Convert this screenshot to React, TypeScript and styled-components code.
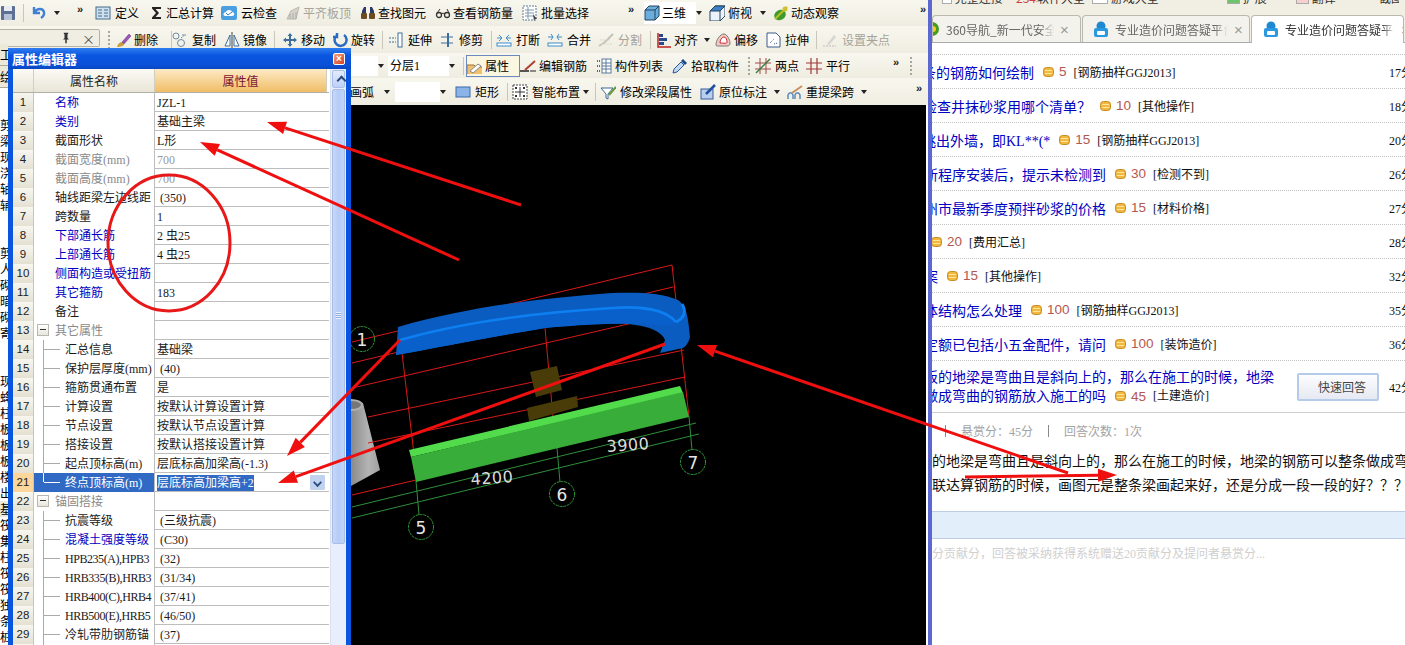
import React from "react";
import styled, { createGlobalStyle } from "styled-components";

const Global = createGlobalStyle`
  html, body { margin: 0; padding: 0; background: #fff; overflow: hidden; }
  * { box-sizing: border-box; }
  body { font-family: "Noto Sans CJK SC", "Liberation Sans", sans-serif; font-size: 12px; color: #000; }
`;

const CJK = `"Liberation Serif", "Noto Sans CJK SC", serif`;

/* ---------- page frame ---------- */
const Page = styled.div`
  position: relative; width: 1405px; height: 645px; display: flex; overflow: hidden;
`;
const Software = styled.div`
  width: 928px; height: 645px; flex: none; display: flex; flex-direction: column; background: #f4f2e8;
`;
const Divider = styled.div`
  width: 4px; flex: none; background: #5b68d2;
`;
const Browser = styled.div`
  flex: 1; min-width: 0; display: flex; flex-direction: column; background: #fff; overflow: hidden;
`;
const Workspace = styled.div`
  flex: 1; min-height: 0; display: flex;
`;
const Sidebar = styled.div`
  width: 350px; flex: none; background: #fff; display: flex; flex-direction: column;
`;
const SideTab = styled.div`
  height: 22px; width: 8px; flex: none; line-height: 22px; background: #ece9d8; border-bottom: 1px solid #aca899; white-space: nowrap; overflow: hidden;
  &:first-child { margin-top: -9px; }
`;
const SideList = styled.div`
  margin-top: 29px; display: flex; flex-direction: column;
`;
const SideItem = styled.div<{ $on?: boolean }>`
  height: 16px; width: 8px; overflow: hidden; line-height: 16px; font-size: 12px; background: ${(p) => (p.$on ? "#ece9d8" : "transparent")};
`;
const RightColumn = styled.div`
  flex: 1; min-width: 0; display: flex; flex-direction: column;
`;
const Canvas = styled.div`
  flex: 1; min-height: 0; background: #000; border-right: 2px solid #fff;
`;
const CanvasSvg = styled.svg`
  display: block;
`;

/* ---------- toolbars ---------- */
const Bar = styled.div<{ $h: number }>`
  height: ${(p) => p.$h}px; flex: none; display: flex; align-items: center; overflow: hidden;
  background: linear-gradient(#f8f7ef, #efede1);
`;
const Tool = styled.div<{ $w: number; $off?: boolean; $active?: boolean; $white?: boolean; $gap?: number }>`
  width: ${(p) => p.$w}px; flex: none; display: flex; align-items: center; gap: ${(p) => p.$gap ?? 3}px;
  height: 22px; white-space: nowrap; line-height: 22px; font-size: 12px; overflow: hidden;
  color: ${(p) => (p.$off ? "#a5a39a" : "#000")};
  background: ${(p) => (p.$white ? "#fff" : p.$active ? "#fbf6df" : "transparent")};
  outline: ${(p) => (p.$active ? "1px solid #6d8ac0" : "none")};
  outline-offset: -1px;
  svg { flex: none; }
`;
const Sep = styled.div<{ $w: number }>`
  width: ${(p) => p.$w}px; flex: none; height: 18px; position: relative;
  &::before { content: ""; position: absolute; left: 0; top: 0; bottom: 0; width: 1px; background: #c9c7ba; }
`;
const Dots = styled.div<{ $w: number }>`
  width: ${(p) => p.$w}px; flex: none; height: 18px; background: radial-gradient(circle at 1px 1px, #a9a79c 1px, transparent 1.2px) 0 0 / 3px 4px repeat-y;
`;
const More = styled.div<{ $w: number }>`
  width: ${(p) => p.$w}px; flex: none; height: 22px; font: bold 11px/14px "Liberation Sans", sans-serif; color: #222;
`;
const Caret = styled.div<{ $w: number }>`
  width: ${(p) => p.$w}px; flex: none; height: 20px; position: relative;
  &::before { content: ""; position: absolute; left: 0; top: 8px; border: 3px solid transparent; border-top: 4px solid #222; border-bottom: 0; }
`;
const Combo = styled.div<{ $w: number }>`
  width: ${(p) => p.$w}px; flex: none; height: 20px; background: #fff; line-height: 20px; padding-left: 2px; font-family: ${CJK};
`;
const DockHeader = styled.div<{ $w: number }>`
  width: ${(p) => p.$w}px; flex: none; height: 18px; border: 1px solid #b4b2a5; border-left: 0; border-radius: 0 2px 2px 0;
  background: #f0eee2; display: flex; align-items: center; justify-content: flex-end; gap: 10px; padding-right: 4px; font-size: 13px; color: #555;
  margin-right: 8px; margin-top: -3px;
`;

/* ---------- property dialog ---------- */
const Dialog = styled.div`
  position: absolute; left: 8px; top: 48px; width: 343px; height: 597px; z-index: 3; display: flex; flex-direction: column;
  background: #0a55e0; border-radius: 3px 3px 0 0; padding: 0 5px 0 5px;
`;
const TitleBar = styled.div`
  height: 21px; flex: none; margin: 0 -5px; padding: 0 6px 0 4px; display: flex; align-items: center; justify-content: space-between;
  background: linear-gradient(#2f7df0, #0a56e0 35%, #0a50d8 80%, #0a48c0);
  color: #fff; font-weight: 700; font-size: 13px; letter-spacing: 0;
`;
const CloseBtn = styled.div`
  width: 12px; height: 12px; background: linear-gradient(135deg, #f0a080, #d8401c); border: 1px solid #fff; border-radius: 2px;
  color: #fff; font: bold 10px/10px "Liberation Sans", sans-serif; text-align: center;
`;
const DialogBody = styled.div`
  flex: 1; min-height: 0; display: flex; background: #fff; overflow: hidden;
`;
const Sheet = styled.div`
  width: 316px; flex: none; display: flex; flex-direction: column;
`;
const Row = styled.div`
  display: grid; grid-template-columns: 21px 121px 172px; height: 19px; flex: none; border-bottom: 1px solid #bdbdbd; position: relative;
`;
const HeadRow = styled(Row)`
  height: 24px; border-bottom: 1px solid #b0b0a8;
`;
const HeadCell = styled.div<{ $value?: boolean }>`
  line-height: 23px; text-align: center; font-size: 12px;
  color: ${(p) => (p.$value ? "#7b1230" : "#222")};
  background: ${(p) => (p.$value ? "linear-gradient(#fdeac6, #f0bd66)" : "linear-gradient(#fbfaf4, #e9e6d8)")};
  border-right: 1px solid #d0cebf;
`;
const NumCell = styled.div<{ $on?: boolean }>`
  line-height: 19px; text-align: center; font-size: 11.5px; font-family: "Liberation Sans", sans-serif; color: #222;
  background: ${(p) => (p.$on ? "#fcd69a" : "linear-gradient(#f7f6ef, #e4e1d3)")};
  border-right: 1px solid #c8c6b8;
`;
const NameCell = styled.div<{ $indent?: boolean; $tone: string; $on?: boolean; $last?: boolean; $narrow?: boolean }>`
  position: relative; line-height: 20px; white-space: nowrap; overflow: hidden; font-family: ${CJK}; font-size: 12px;
  letter-spacing: ${(p) => (p.$narrow ? "-0.45px" : "0")};
  padding-left: ${(p) => (p.$indent ? "31px" : "21px")};
  color: ${(p) => (p.$on ? "#fff" : p.$tone === "blue" ? "#0000c0" : p.$tone === "gray" ? "#8a8a8a" : "#1a1a1a")};
  background: ${(p) => (p.$on ? "#316ac5" : "#fff")};
  border-right: 1px solid #bdbdbd;
  ${(p) => p.$indent && `
    &::before { content: ""; position: absolute; left: 9px; top: 0; height: ${p.$last ? "9px" : "19px"}; width: 1px; background: ${p.$on ? "#fff" : "#aaa"}; }
    &::after { content: ""; position: absolute; left: 10px; top: 9px; width: 16px; height: 1px; background: ${p.$on ? "#fff" : "#aaa"}; }
  `}
`;
const GroupBox = styled.span`
  position: absolute; left: 3px; top: 3px; width: 12px; height: 12px; border: 1px solid #b8b8b0; background: linear-gradient(#fff, #e8e6da);
  &::before { content: ""; position: absolute; left: 2px; right: 2px; top: 4px; height: 1px; background: #333; }
`;
const ValueCell = styled.div<{ $gray?: boolean }>`
  position: relative; line-height: 20px; white-space: pre; overflow: hidden; padding-left: 2px; font-family: ${CJK}; font-size: 12px;
  color: ${(p) => (p.$gray ? "#999" : "#1a1a1a")};
`;
const Selected = styled.span`
  background: #316ac5; color: #fff; display: inline-block; line-height: 16px; height: 16px; margin-top: 0;
`;
const DropBtn = styled.span`
  position: absolute; right: 2px; top: 2px; width: 15px; height: 15px; background: #c1d2ee; border-radius: 1px;
  &::before { content: ""; position: absolute; left: 4px; top: 4px; width: 5px; height: 5px; border-right: 2px solid #2a4a80; border-bottom: 2px solid #2a4a80; transform: rotate(45deg) scale(.9); }
`;
const Scroll = styled.div`
  flex: 1; margin-left: 1px; padding: 1px 1px 0; background: #e8eefb; display: flex; flex-direction: column; gap: 1px; border-left: 1px solid #d8e0f0;
`;
const ScrollBtn = styled.div`
  height: 18px; flex: none; background: linear-gradient(#e4ecfc, #bcd0f6); border: 1px solid #a8bde8; border-radius: 2px; position: relative;
  &::before { content: ""; position: absolute; left: 5px; top: 6px; width: 5px; height: 5px; border-left: 2px solid #2a4a80; border-top: 2px solid #2a4a80; transform: rotate(45deg); }
`;
const ScrollThumb = styled.div`
  height: 455px; flex: none; background: linear-gradient(90deg, #c6d7f8, #b6ccf6 50%, #c2d4f8); border: 1px solid #a8bde8; border-radius: 2px; position: relative;
  &::before { content: ""; position: absolute; left: 3px; right: 3px; top: 222px; height: 7px;
    background: repeating-linear-gradient(#eef3fd 0 1px, #8da8dc 1px 2px); }
`;

/* ---------- browser ---------- */
const Strip = styled.div`
  height: 15px; flex: none; overflow: hidden; background: #f1efe3; position: relative;
`;
const StripInner = styled.div`
  margin-top: -10px; display: flex; align-items: center; height: 14px; color: #333; font-size: 12px; white-space: nowrap;
`;
const StripItem = styled.span<{ $w: number; $c?: string; $box?: string }>`
  width: ${(p) => p.$w}px; flex: none; overflow: hidden; color: ${(p) => p.$c ?? "#333"};
  ${(p) => p.$box && `height: 14px; border: 1px solid #aaa; background: ${p.$box};`}
`;
const Tabs = styled.div`
  height: 28px; flex: none; display: flex; align-items: flex-end; gap: 1px; background: #f1efe3; border-bottom: 1px solid #aaa;
`;
const Tab = styled.div<{ $w: number; $on?: boolean; $pad: number }>`
  width: ${(p) => p.$w}px; flex: none; height: ${(p) => (p.$on ? "28px" : "27px")}; display: flex; align-items: center; gap: 6px; padding-left: ${(p) => p.$pad}px; overflow: hidden;
  border: 1px solid #b9b9b0; border-bottom: 0; border-radius: 4px 4px 0 0;
  background: ${(p) => (p.$on ? "#fff" : "#f3f2ec")}; color: ${(p) => (p.$on ? "#333" : "#666")};
  margin-bottom: ${(p) => (p.$on ? "-1px" : "0")};
  font-size: 12px; white-space: nowrap;
`;
const TabText = styled.span<{ $w: number }>`
  width: ${(p) => p.$w}px; flex: none; overflow: hidden;
  -webkit-mask-image: linear-gradient(90deg, #000 88%, transparent);
  mask-image: linear-gradient(90deg, #000 88%, transparent);
`;
const TabClose = styled.span`
  color: #999; font: 15px/15px "Liberation Sans", sans-serif; flex: none;
`;
const List = styled.div`
  margin-top: 11px; display: flex; flex-direction: column; border-top: 1px dotted #c4c4c4;
`;
const Item = styled.div<{ $tall?: boolean }>`
  height: ${(p) => (p.$tall ? "52px" : "34px")}; flex: none; display: flex; align-items: center; overflow: hidden; white-space: nowrap;
  border-bottom: ${(p) => (p.$tall ? "1px solid #cfcfcf" : "1px dotted #c4c4c4")};
`;
const ItemMain = styled.div<{ $lead: number }>`
  display: flex; align-items: center; margin-left: ${(p) => p.$lead}px;
`;
const ItemStack = styled.div<{ $lead: number }>`
  display: flex; flex-direction: column; margin-left: ${(p) => p.$lead}px; line-height: 19px;
`;
const Title = styled.span`
  color: #0000c0; font-size: 14px; font-family: ${CJK}; margin-right: 9px;
`;
const Score = styled.span`
  color: #b4574e; font: 13.5px "Liberation Sans", sans-serif; margin: 0 7px 0 5px;
`;
const Tag = styled.span`
  font-family: ${CJK}; font-size: 12px; color: #111;
`;
const Spacer = styled.div`
  flex: 1;
`;
const Time = styled.span`
  width: 16px; flex: none; overflow: hidden; font-family: ${CJK}; font-size: 12px; color: #111; white-space: nowrap;
`;
const QuickBtn = styled.div`
  width: 82px; height: 28px; flex: none; margin-right: 10px; border: 2px solid #b5cbea; border-radius: 2px; text-align: right; padding-right: 11px; line-height: 23px;
  background: linear-gradient(#fdfdff, #e6e9f2); color: #444; font-size: 12px;
`;
const Meta = styled.div`
  height: 35px; flex: none; display: flex; align-items: center; color: #a3a3a3; font-size: 12px; padding-left: 13px;
`;
const MetaSep = styled.span`
  width: 1px; height: 12px; background: #888; flex: none;
`;
const MetaText = styled.span`
  margin: 0 15px; font-family: ${CJK};
`;
const Para = styled.div`
  font-size: 14px; line-height: 24px; white-space: nowrap; color: #111;
`;
const Band = styled.div`
  height: 28px; flex: none; margin-top: 15px; background: #e3eefb; border-top: 1px solid #bccde4; border-bottom: 1px solid #bccde4;
`;
const Placeholder = styled.div`
  margin-top: 5px; line-height: 20px; color: #cfcfcf; font-size: 12px; white-space: nowrap; font-family: ${CJK};
`;

const Overlay = styled.svg`
  position: absolute; left: 0; top: 0; z-index: 5; pointer-events: none;
`;

/* ---------- icons ---------- */
const shapes: Record<string, React.ReactNode> = {
  save: <><rect x="1" y="1" width="14" height="14" rx="1" fill="#5c6f94" /><rect x="4" y="1" width="8" height="5" fill="#e8ecf4" /><rect x="4" y="9" width="8" height="6" fill="#b7c2d8" /></>,
  undo: <path d="M3 2v6h6M4 7c2-4 8-4 9 0 .6 3-1.500 5-3 6" fill="none" stroke="#3f7fd4" strokeWidth="2.400" />,
  define: <><rect x="1" y="2" width="14" height="12" fill="#cfe0ef" stroke="#456a8c" /><path d="M3 5h4M3 8h4M3 11h4M9 5h4M9 8h4M9 11h4" stroke="#456a8c" /></>,
  sigma: <path d="M3 2h9v2H6.500l3.500 4-3.500 4H12v2H3v-1.500L7 8 3 3.500z" fill="#222" />,
  cloud: <><rect x="0" y="1" width="16" height="14" rx="2" fill="#4a9fe0" /><path d="M4 11c-3-1-1-4 1-4 1-3 6-2 6 0 3 0 3 4 0 4z" fill="#fff" /><path d="M5 8l2 2 4-3" stroke="#3a86cc" fill="none" /></>,
  flat: <><path d="M2 14l4-8 8-4-3 12z" fill="#d5d4cc" stroke="#b9b8ae" /><path d="M5 14V9M8 14V8M11 14V7" stroke="#aaa" /></>,
  binoc: <><path d="M2 13V6l2-4h2v11zM14 13V6l-2-4h-2v11z" fill="#2b3a66" /><rect x="1" y="8" width="6" height="6" rx="1" fill="#6d4a22" /><rect x="9" y="8" width="6" height="6" rx="1" fill="#6d4a22" /></>,
  glasses: <><circle cx="4" cy="10" r="2.500" fill="none" stroke="#333" strokeWidth="1.300" /><circle cx="12" cy="10" r="2.500" fill="none" stroke="#333" strokeWidth="1.300" /><path d="M6 9c1-1 3-1 4 0M2 8l3-4M14 8l-2-4" stroke="#333" fill="none" /></>,
  batch: <><rect x="1" y="1" width="13" height="14" fill="#fff" stroke="#5a7a9a" strokeDasharray="2 1" /><path d="M3 5h9M3 8h9M3 11h9M6 2v12" stroke="#7e95ae" /><path d="M11 9l4 5-2 0 -1 2z" fill="#444" /></>,
  cube: <><path d="M1 5l4-4h10v10l-4 4H1z" fill="#6aaede" stroke="#27435f" /><path d="M1 5h10v10M11 5l4-4" fill="none" stroke="#27435f" /></>,
  cubeTop: <><path d="M1 6l5-5h10v10l-5 5H1z" fill="#eaf3fa" stroke="#27435f" /><path d="M1 6l5-5h10l-5 5z" fill="#3f7fc4" stroke="#27435f" /><path d="M11 6v10" stroke="#27435f" /></>,
  orbit: <><ellipse cx="7" cy="10" rx="6" ry="5" fill="#3f9a2e" transform="rotate(-30 7 10)" /><path d="M2 14L14 2" stroke="#b8c020" strokeWidth="2" /><circle cx="12" cy="4" r="2.500" fill="#d0c030" /></>,
  brush: <><path d="M1 15c1-4 3-5 6-5l1 2c0 2-3 3-7 3z" fill="#c8a040" /><path d="M6 10l7-8 2 2-7 8z" fill="#9a58b4" stroke="#6a3a84" strokeWidth=".5" /></>,
  copy: <><circle cx="4" cy="4" r="3" fill="none" stroke="#6f8aa8" /><circle cx="9" cy="11" r="3.500" fill="none" stroke="#6f8aa8" /><path d="M9 6l5-4M10 3h4" stroke="#6f8aa8" strokeDasharray="2 1" /></>,
  mirror: <><path d="M8 0v16" stroke="#444" /><path d="M6 3v11H1zM10 3v11h5z" fill="#fff" stroke="#3c6c9a" /></>,
  move: <path d="M8 1l2.500 3H9v3h3V5.500L15 8l-3 2.500V9H9v3h1.500L8 15l-2.500-3H7V9H4v1.500L1 8l3-2.500V7h3V4H5.500z" fill="#3d6e9c" />,
  rotate: <path d="M12 3a6 6 0 1 1-8 1M5 1v4H1" fill="none" stroke="#2a6cc4" strokeWidth="2.500" />,
  extend: <><path d="M1 6h7M1 10h7" stroke="#3d6e9c" strokeDasharray="2 1" /><rect x="10" y="1" width="4" height="14" fill="#fff" stroke="#3d6e9c" /></>,
  trim: <><path d="M1 5h12M1 11h12" stroke="#3d6e9c" /><rect x="7" y="1" width="2" height="14" fill="#3d6e9c" /></>,
  cut: <><path d="M1 6h5M10 6h5M3 3l3 3-3 3M13 3l-3 3 3 3" fill="none" stroke="#3d8cc8" /><rect x="1" y="11" width="14" height="3" fill="#fff" stroke="#3d8cc8" /></>,
  merge: <><path d="M1 5h5M10 5h5M4 2l2 3-2 3M12 2l-2 3 2 3" fill="none" stroke="#3d8cc8" /><rect x="1" y="11" width="14" height="3" fill="#fff" stroke="#3d8cc8" /></>,
  split: <><path d="M1 14l6-4 8-8" stroke="#c4c2b8" strokeWidth="2" fill="none" /><path d="M2 8h10M3 12h11" stroke="#d8d6cc" strokeDasharray="2 1" /></>,
  align: <><path d="M2 1v14h13" stroke="#c02020" strokeWidth="1.500" fill="none" /><rect x="3" y="2" width="4" height="3" fill="#2a4a90" /><rect x="3" y="6" width="8" height="3" fill="#2a4a90" /><rect x="3" y="10" width="5" height="3" fill="#2a4a90" /></>,
  offset: <><path d="M1 13c0-5 4-11 8-11 3 0 6 6 6 9 0 2-1 3-3 3H3c-1 0-2 0-2-1z" fill="#f2c8c0" stroke="#7a7a7a" /><path d="M5 11c0-3 2-6 4-6s3 3 3 5-3 1-7 1z" fill="#fff" stroke="#c23" /></>,
  stretch: <><path d="M1 1h9l4 4v10H1z" fill="#fff" stroke="#3a5a8a" /><path d="M4 11l4-4M8 12l4-1" stroke="#3a5a8a" strokeDasharray="1 1" /></>,
  grip: <><path d="M1 14h13" stroke="#bbb" strokeDasharray="2 1" /><path d="M5 12l7-9 2 2-7 8z" fill="#d8d6cc" /></>,
  prop: <><path d="M1 7h7l2 2h9v8H1z" fill="#f0c070" stroke="#a07030" /><path d="M4 13l8-7 3 2-8 7z" fill="#fff" stroke="#888" /></>,
  edit: <><path d="M0 13h9" stroke="#222" strokeWidth="1.500" /><path d="M5 12L15 3" stroke="#b04030" strokeWidth="2" /><path d="M10 13h7" stroke="#222" /></>,
  list: <><path d="M1 3h3M1 8h3M1 13h3" stroke="#666" strokeDasharray="1 1" strokeWidth="2" /><rect x="6" y="1" width="9" height="14" fill="#fff" stroke="#5a7a9a" /><path d="M6 5h9M6 8h9M6 11h9M10 1v14" stroke="#5a7a9a" /></>,
  pick: <><path d="M1 15l1-4 7-7 3 3-7 7z" fill="#bcd8f4" stroke="#2a5a9a" /><path d="M9 3l2-2 4 4-2 2z" fill="#1a4a8a" /></>,
  twoPt: <><path d="M0 5h16M0 11h16M5 0v16M11 0v16" stroke="#a04848" /><path d="M1 15L15 1" stroke="#3a7a3a" strokeWidth="1.500" /></>,
  parallel: <path d="M0 5h16M0 11h16M5 0v16M11 0v16" stroke="#a03838" strokeWidth="1.200" />,
  rect: <rect x="1" y="3" width="14" height="10" fill="#8ab4e8" stroke="#3a6aa8" />,
  smart: <><rect x="1" y="1" width="14" height="14" fill="#fff" stroke="#444" strokeDasharray="2 1" /><path d="M8 3v10M3 8h10" stroke="#333" /><rect x="3" y="3" width="2" height="2" fill="#333" /><rect x="11" y="11" width="2" height="2" fill="#333" /><rect x="11" y="3" width="2" height="2" fill="#333" /><rect x="3" y="11" width="2" height="2" fill="#333" /></>,
  modify: <><path d="M1 4h12l-5 6v5l-2-1v-4z" fill="#fff" stroke="#3a6a9a" /><path d="M9 11l7-8" stroke="#6a9a30" strokeWidth="2" /></>,
  inplace: <><rect x="1" y="5" width="12" height="10" fill="#b8cff0" stroke="#3a5a9a" /><path d="M6 10L15 1" stroke="#2050a0" strokeWidth="2.500" /></>,
  respan: <><path d="M1 15v-4c1-3 4-3 5 0v4M8 15v-4c1-3 4-3 5 0v4" fill="none" stroke="#5a8ac0" strokeWidth="1.500" /><path d="M5 9L15 2" stroke="#c89060" strokeWidth="2" /></>,
  pin: <path d="M5 1h6v1l-1 1v5l2 2H9v5H7v-5H4l2-2V3L5 2z" fill="#333" />,
};

function Icon({ name, size = 16 }: { name: string; size?: number }) {
  return <svg width={size} height={size} viewBox="0 0 16 16">{shapes[name]}</svg>;
}

type Entry = { x: number; k?: "sep" | "dots" | "more" | "caret" | "combo"; i?: string; t?: string; off?: boolean; active?: boolean; white?: boolean; gap?: number };

function Entries({ end, entries }: { end: number; entries: Entry[] }) {
  return (
    <>
      {entries.map((e, n) => {
        const next = n + 1 < entries.length ? entries[n + 1].x : end;
        const w = next - e.x;
        if (e.k === "sep") return <Sep key={n} $w={w} />;
        if (e.k === "dots") return <Dots key={n} $w={w} />;
        if (e.k === "more") return <More key={n} $w={w}>»</More>;
        if (e.k === "caret") return <Caret key={n} $w={w} />;
        if (e.k === "combo") return <Combo key={n} $w={w}>{e.t}</Combo>;
        return (
          <Tool key={n} $w={w} $off={e.off} $active={e.active} $white={e.white} $gap={e.gap}>
            {e.i && <Icon name={e.i} />}
            {e.t && <span>{e.t}</span>}
          </Tool>
        );
      })}
    </>
  );
}

const row1: Entry[] = [
  { x: -4, i: "save" }, { x: 19, k: "sep" }, { x: 27, i: "undo" }, { x: 50, k: "caret" }, { x: 73, k: "more" },
  { x: 91, i: "define", t: "定义", gap: 4 }, { x: 145, i: "sigma", t: "汇总计算", gap: 1 }, { x: 217, i: "cloud", t: "云检查", gap: 4 },
  { x: 281, i: "flat", t: "平齐板顶", off: true, gap: 2 }, { x: 356, i: "binoc", t: "查找图元", gap: 2 }, { x: 431, i: "glasses", t: "查看钢筋量", gap: 2 },
  { x: 518, i: "batch", t: "批量选择", gap: 3 }, { x: 624, k: "more" }, { x: 640, i: "cube", t: "三维", white: true, gap: 2 }, { x: 692, k: "caret" },
  { x: 705, i: "cubeTop", t: "俯视", gap: 3 }, { x: 756, k: "caret" }, { x: 769, i: "orbit", t: "动态观察", gap: 2 }, { x: 916, k: "more" },
];
const row2: Entry[] = [
  { x: 108, k: "dots" }, { x: 116, i: "brush", t: "删除", gap: 2 }, { x: 171, k: "sep" }, { x: 172, i: "copy", t: "复制", gap: 4 }, { x: 224, i: "mirror", t: "镜像", gap: 3 },
  { x: 274, k: "sep" }, { x: 282, i: "move", t: "移动", gap: 3 }, { x: 332, i: "rotate", t: "旋转", gap: 3 }, { x: 382, k: "sep" }, { x: 388, i: "extend", t: "延伸", gap: 4 },
  { x: 440, i: "trim", t: "修剪", gap: 3 }, { x: 491, k: "sep" }, { x: 496, i: "cut", t: "打断", gap: 4 }, { x: 547, i: "merge", t: "合并", gap: 4 },
  { x: 598, i: "split", t: "分割", off: true, gap: 4 }, { x: 650, k: "sep" }, { x: 656, i: "align", t: "对齐", gap: 2 }, { x: 704, k: "caret" },
  { x: 715, i: "offset", t: "偏移", gap: 3 }, { x: 766, i: "stretch", t: "拉伸", gap: 3 }, { x: 816, k: "sep" }, { x: 822, i: "grip", t: "设置夹点", off: true, gap: 4 },
];
const row3: Entry[] = [
  { x: 350, k: "combo" }, { x: 378, k: "caret" }, { x: 388, k: "combo", t: "分层1" }, { x: 449, k: "caret" }, { x: 463, k: "sep" },
  { x: 466, i: "prop", t: "属性", active: true, gap: 3 }, { x: 520, i: "edit", t: "编辑钢筋", gap: 3 }, { x: 596, i: "list", t: "构件列表", gap: 3 },
  { x: 672, i: "pick", t: "拾取构件", gap: 3 }, { x: 748, k: "dots" }, { x: 755, i: "twoPt", t: "两点", gap: 4 }, { x: 806, i: "parallel", t: "平行", gap: 4 },
  { x: 893, k: "more" }, { x: 910, k: "dots" },
];
const row4: Entry[] = [
  { x: 350, t: "  画弧", gap: 0 }, { x: 384, k: "caret" }, { x: 395, k: "combo" }, { x: 440, k: "caret" }, { x: 455, i: "rect", t: "矩形", gap: 4 },
  { x: 507, k: "sep" }, { x: 512, i: "smart", t: "智能布置", gap: 4 }, { x: 583, k: "caret" }, { x: 595, k: "sep" }, { x: 600, i: "modify", t: "修改梁段属性", gap: 4 },
  { x: 700, i: "inplace", t: "原位标注", gap: 3 }, { x: 774, k: "caret" }, { x: 787, i: "respan", t: "重提梁跨", gap: 3 }, { x: 861, k: "caret" }, { x: 916, k: "more" },
];

/* ---------- data ---------- */
type P = { name: string; value?: string; tone?: string; indent?: boolean; group?: boolean; grayV?: boolean; on?: boolean; last?: boolean; narrow?: boolean };
const props: P[] = [
  { name: "名称", value: "JZL-1", tone: "blue" },
  { name: "类别", value: "基础主梁", tone: "blue" },
  { name: "截面形状", value: "L形" },
  { name: "截面宽度(mm)", value: "700", tone: "gray", grayV: true },
  { name: "截面高度(mm)", value: "700", tone: "gray", grayV: true },
  { name: "轴线距梁左边线距", value: " (350)" },
  { name: "跨数量", value: "1" },
  { name: "下部通长筋", value: "2 虫25", tone: "blue" },
  { name: "上部通长筋", value: "4 虫25", tone: "blue" },
  { name: "侧面构造或受扭筋", value: "", tone: "blue" },
  { name: "其它箍筋", value: "183", tone: "blue" },
  { name: "备注", value: "" },
  { name: "其它属性", tone: "gray", group: true },
  { name: "汇总信息", value: "基础梁", indent: true },
  { name: "保护层厚度(mm)", value: " (40)", indent: true },
  { name: "箍筋贯通布置", value: "是", indent: true },
  { name: "计算设置", value: "按默认计算设置计算", indent: true },
  { name: "节点设置", value: "按默认节点设置计算", indent: true },
  { name: "搭接设置", value: "按默认搭接设置计算", indent: true },
  { name: "起点顶标高(m)", value: "层底标高加梁高(-1.3)", indent: true },
  { name: "终点顶标高(m)", value: "层底标高加梁高+2", indent: true, on: true, last: true },
  { name: "锚固搭接", tone: "gray", group: true },
  { name: "抗震等级", value: " (三级抗震)", indent: true },
  { name: "混凝土强度等级", value: " (C30)", indent: true, tone: "blue" },
  { name: "HPB235(A),HPB3", value: " (32)", indent: true, narrow: true },
  { name: "HRB335(B),HRB3", value: " (31/34)", indent: true, narrow: true },
  { name: "HRB400(C),HRB4", value: " (37/41)", indent: true, narrow: true },
  { name: "HRB500(E),HRB5", value: " (46/50)", indent: true, narrow: true },
  { name: "冷轧带肋钢筋锚", value: " (37)", indent: true },
  { name: "冷轧扭钢筋锚固", value: " (35)", indent: true },
];

const sideChars = ["剪", "梁", "现", "浇", "轴", "辅", "", "", "剪", "人", "砌", "暗", "砌", "寄", "", "", "现", "蜂", "柱", "板", "板", "板", "楼", "出", "基", "筏", "集", "柱", "筏", "筏", "独", "条", "桩"];

type Q = { lead: number; title?: string; score: string; tag: string; time: string };
const questions: Q[] = [
  { lead: -10, title: "条的钢筋如何绘制", score: "5", tag: "[钢筋抽样GGJ2013]", time: "17分钟" },
  { lead: -9, title: "检查井抹砂浆用哪个清单？", score: "10", tag: "[其他操作]", time: "18分钟" },
  { lead: -10, title: "挑出外墙，即KL**(*", score: "15", tag: "[钢筋抽样GGJ2013]", time: "20分钟" },
  { lead: -8, title: "新程序安装后，提示未检测到", score: "30", tag: "[检测不到]", time: "26分钟" },
  { lead: -8, title: "州市最新季度预拌砂浆的价格", score: "15", tag: "[材料价格]", time: "27分钟" },
  { lead: -1, score: "20", tag: "[费用汇总]", time: "28分钟" },
  { lead: -8, title: "案", score: "15", tag: "[其他操作]", time: "32分钟" },
  { lead: -8, title: "体结构怎么处理", score: "100", tag: "[钢筋抽样GGJ2013]", time: "35分钟" },
  { lead: -8, title: "定额已包括小五金配件，请问", score: "100", tag: "[装饰造价]", time: "36分钟" },
];

function Coin() {
  return (
    <svg width="11" height="10" viewBox="0 0 11 10" style={{ flex: "none" }}>
      <rect x="0.500" y="0.500" width="10" height="9" rx="3" fill="#f0b840" stroke="#c98a20" />
      <path d="M2 3.500h7M2 6.500h7" stroke="#fbe69a" />
    </svg>
  );
}
function Favicon() {
  return (
    <svg width="16" height="17" viewBox="0 0 16 17" style={{ flex: "none" }}>
      <circle cx="8" cy="5" r="4.500" fill="#1e88d0" />
      <rect x="1" y="7" width="14" height="9" rx="2" fill="#2a9ae0" />
      <rect x="4" y="10" width="8" height="4" rx="1" fill="#fff" />
    </svg>
  );
}
function Ball360() {
  return (
    <svg width="12" height="16" viewBox="0 0 12 16" style={{ flex: "none", marginLeft: -5 }}>
      <circle cx="4" cy="8" r="7" fill="#4a9a20" />
      <circle cx="5" cy="8" r="3" fill="#f0d020" />
    </svg>
  );
}

/* ---------- annotation arrows ---------- */
function Arrow({ a, b, c, d }: { a: number; b: number; c: number; d: number }) {
  const len = Math.hypot(c - a, d - b);
  const ux = (c - a) / len, uy = (d - b) / len;
  const L = 19, W = 6.500;
  const bx = c - ux * L, by = d - uy * L;
  const head = `${c},${d} ${bx - uy * W},${by + ux * W} ${bx + uy * W},${by - ux * W}`;
  return (
    <>
      <line x1={a} y1={b} x2={bx} y2={by} stroke="#f00f0f" strokeWidth="3" />
      <polygon points={head} fill="#f00f0f" />
    </>
  );
}

function Axis({ x, y, n }: { x: number; y: number; n: string }) {
  return (
    <>
      <circle cx={x} cy={y} r="12.500" fill="none" stroke="#2f9a3a" strokeDasharray="3 .8" />
      <text x={x} y={y + 6.500} textAnchor="middle" fontSize="17" fontFamily="DejaVu Sans, sans-serif" fill="#e6e6e6">{n}</text>
    </>
  );
}

function Scene() {
  return (
    <CanvasSvg width="576" height="540" viewBox="350 105 576 540">
      <defs>
        <linearGradient id="cone" x1="0" x2="1"><stop offset="0" stopColor="#8a8a8a" /><stop offset=".6" stopColor="#b4b4b4" /><stop offset="1" stopColor="#a0a0a0" /></linearGradient>
      </defs>
      <path d="M351 400l12 3 17 67-29 16z" fill="url(#cone)" />
      <ellipse cx="351" cy="405" rx="11" ry="5" fill="#777" stroke="#b0b0b0" strokeWidth="2" />
      <g stroke="#d81818" strokeWidth="1" fill="none">
        <path d="M352 342L672 265" /><path d="M352 363L673 287" /><path d="M352 388L680 312" />
        <path d="M368 417L684 350" /><path d="M368 443L685 377" /><path d="M352 495L416 480" />
        <path d="M402 353L417 480" /><path d="M545 328L553 417" /><path d="M672 265L689 417" />
      </g>
      <g stroke="#2f8f3a" strokeWidth="1" fill="none">
        <path d="M352 507L696 423" /><path d="M352 518L699 434" />
        <path d="M416 481L419 515" /><path d="M557 448L560 482" /><path d="M689 417L692 450" />
      </g>
      <path d="M530 372L557 366L562 390L536 397zM527 408L577 396L578 407L529 421z" fill="#4a3c08" />
      <path d="M409 450L680 386L683 393L411 457z" fill="#52dc4c" />
      <path d="M411 457L683 392L689 417L416 482z" fill="#38ad3a" />
      <path d="M398 327C470 306 545 298 612 293C640 292 662 293 678 300C685 305 688 312 690 337C689 342 686 346 683 348L660 353L665 340C662 332 650 326 628 324C600 323 570 325 545 328C490 337 440 347 396 355z" fill="#0a5cc0" />
      <path d="M400 340C470 320 545 312 612 308C640 306 664 308 676 322C670 326 662 326 655 325C640 322 590 324 545 328C490 337 440 347 396 355z" fill="#0a60ca" />
      <path d="M400 340C470 320 545 312 612 308C640 306 664 308 676 322" fill="none" stroke="#0d7ff0" strokeWidth="2.500" />
      <path d="M676 322C684 318 687 312 682 304" fill="none" stroke="#0d7ff0" strokeWidth="3" />
      <Axis x={362} y={339} n="1" />
      <Axis x={421} y={527} n="5" />
      <Axis x={562} y={494} n="6" />
      <Axis x={693} y={462} n="7" />
      <text x="0" y="0" fontSize="16" fontFamily="DejaVu Sans, sans-serif" fill="#dcdcdc" transform="translate(471 485) rotate(-4)" letterSpacing=".5">4200</text>
      <text x="0" y="0" fontSize="16" fontFamily="DejaVu Sans, sans-serif" fill="#dcdcdc" transform="translate(607 452) rotate(-4)" letterSpacing=".5">3900</text>
    </CanvasSvg>
  );
}

export default function App() {
  return (
    <Page>
      <Global />
      <Software>
        <Bar $h={26}>
          <Entries end={928} entries={row1} />
        </Bar>
        <Bar $h={27}>
          <DockHeader $w={100}>
            <Icon name="pin" size={12} />
            <span>×</span>
          </DockHeader>
          <Entries end={928} entries={row2} />
        </Bar>
        <Workspace>
          <Sidebar>
            <SideTab>工程</SideTab>
            <SideTab>绘图</SideTab>
            <SideList>
              {sideChars.map((c, i) => (
                <SideItem key={i} $on={c === "基"}>{c}</SideItem>
              ))}
            </SideList>
          </Sidebar>
          <RightColumn>
            <Bar $h={25}>
              <Entries end={928} entries={row3} />
            </Bar>
            <Bar $h={27}>
              <Entries end={928} entries={row4} />
            </Bar>
            <Canvas>
              <Scene />
            </Canvas>
          </RightColumn>
        </Workspace>
      </Software>
      <Divider />
      <Browser>
        <Strip>
          <StripInner>
            <StripItem $w={10} />
            <StripItem $w={10} $box="#fff" />
            <StripItem $w={64}>&nbsp;完整连接</StripItem>
            <StripItem $w={21} $c="#d04040">2345</StripItem>
            <StripItem $w={55}>软件大全</StripItem>
            <StripItem $w={16} $box="#fff" />
            <StripItem $w={119}>&nbsp;游戏大全</StripItem>
            <StripItem $w={13} $box="#6dc46d" />
            <StripItem $w={56}>&nbsp;扩展</StripItem>
            <StripItem $w={13} $box="#f8d0d0" />
            <StripItem $w={70}>&nbsp;翻译</StripItem>
            <StripItem $w={20}>截图</StripItem>
          </StripInner>
        </Strip>
        <Tabs>
          <Tab $w={149} $pad={0}>
            <Ball360 />
            <TabText $w={108}>360导航_新一代安全上网</TabText>
            <TabClose>×</TabClose>
          </Tab>
          <Tab $w={168} $pad={10}>
            <Favicon />
            <TabText $w={113}>专业造价问题答疑平台</TabText>
            <TabClose>×</TabClose>
          </Tab>
          <Tab $w={153} $on $pad={11}>
            <Favicon />
            <TabText $w={110}>专业造价问题答疑平台</TabText>
            <TabClose>×</TabClose>
          </Tab>
        </Tabs>
        <List>
          {questions.map((q, i) => (
            <Item key={i}>
              <ItemMain $lead={q.lead}>
                {q.title && <Title>{q.title}</Title>}
                <Coin />
                <Score>{q.score}</Score>
                <Tag>{q.tag}</Tag>
              </ItemMain>
              <Spacer />
              <Time>{q.time}</Time>
            </Item>
          ))}
          <Item $tall>
            <ItemStack $lead={-8}>
              <Title>板的地梁是弯曲且是斜向上的，那么在施工的时候，地梁</Title>
              <ItemMain $lead={0}>
                <Title>做成弯曲的钢筋放入施工的吗</Title>
                <Coin />
                <Score>45</Score>
                <Tag>[土建造价]</Tag>
              </ItemMain>
            </ItemStack>
            <Spacer />
            <QuickBtn>快速回答</QuickBtn>
            <Time>42分钟</Time>
          </Item>
        </List>
        <Meta>
          <MetaSep />
          <MetaText>悬赏分：45分</MetaText>
          <MetaSep />
          <MetaText>回答次数：1次</MetaText>
        </Meta>
        <Para>的地梁是弯曲且是斜向上的，那么在施工的时候，地梁的钢筋可以整条做成弯曲的</Para>
        <Para>联达算钢筋的时候，画图元是整条梁画起来好，还是分成一段一段的好？？？</Para>
        <Band />
        <Placeholder>分贡献分，回答被采纳获得系统赠送20贡献分及提问者悬赏分...</Placeholder>
      </Browser>

      <Dialog>
        <TitleBar>
          <span>属性编辑器</span>
          <CloseBtn>×</CloseBtn>
        </TitleBar>
        <DialogBody>
          <Sheet>
            <HeadRow>
              <HeadCell />
              <HeadCell>属性名称</HeadCell>
              <HeadCell $value>属性值</HeadCell>
            </HeadRow>
            {props.map((p, i) => (
              <Row key={i}>
                <NumCell $on={p.on}>{i + 1}</NumCell>
                <NameCell $indent={p.indent} $tone={p.tone ?? "black"} $on={p.on} $last={p.last} $narrow={p.narrow}>
                  {p.group && <GroupBox />}
                  {p.name}
                </NameCell>
                <ValueCell $gray={p.grayV}>
                  {p.on ? <Selected>{p.value}</Selected> : p.value}
                  {p.on && <DropBtn />}
                </ValueCell>
              </Row>
            ))}
          </Sheet>
          <Scroll>
            <ScrollBtn />
            <ScrollThumb />
          </Scroll>
        </DialogBody>
      </Dialog>

      <Overlay width="1405" height="645" viewBox="0 0 1405 645">
        <Arrow a={521} b={205} c={267} d={122} />
        <Arrow a={459} b={260} c={200} d={142} />
        <Arrow a={400} b={340} c={287} d={456} />
        <Arrow a={665} b={344} c={278} d={483} />
        <Arrow a={1068} b={473} c={697} d={345} />
        <Arrow a={965} b={477} c={1117} d={475} />
        <ellipse cx="169" cy="243" rx="61" ry="68" fill="none" stroke="#e81818" strokeWidth="3" />
      </Overlay>
    </Page>
  );
}
